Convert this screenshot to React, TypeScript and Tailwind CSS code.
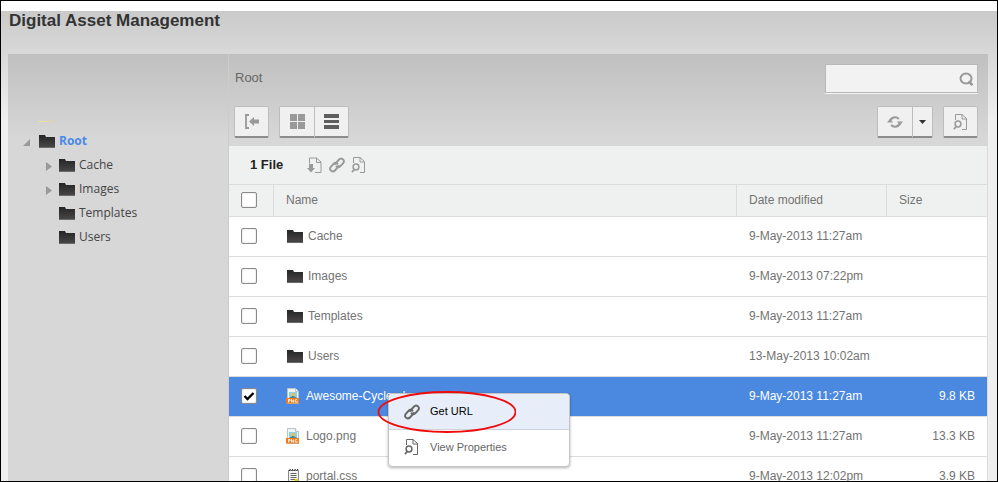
import { useState } from 'react';

type Kind = 'folder' | 'png' | 'css';

interface Entry {
  name: string;
  kind: Kind;
  modified: string;
  size?: string;
}

const entries: Entry[] = [
  { name: 'Cache', kind: 'folder', modified: '9-May-2013 11:27am' },
  { name: 'Images', kind: 'folder', modified: '9-May-2013 07:22pm' },
  { name: 'Templates', kind: 'folder', modified: '9-May-2013 11:27am' },
  { name: 'Users', kind: 'folder', modified: '13-May-2013 10:02am' },
  { name: 'Awesome-Cycles-Logo.png', kind: 'png', modified: '9-May-2013 11:27am', size: '9.8 KB' },
  { name: 'Logo.png', kind: 'png', modified: '9-May-2013 11:27am', size: '13.3 KB' },
  { name: 'portal.css', kind: 'css', modified: '9-May-2013 12:02pm', size: '3.9 KB' },
];

const tree = [
  { name: 'Cache', expandable: true },
  { name: 'Images', expandable: true },
  { name: 'Templates', expandable: false },
  { name: 'Users', expandable: false },
];

function FolderIcon() {
  return (
    <svg width="16" height="13" viewBox="0 0 16 13" className="shrink-0" aria-hidden="true">
      <defs>
        <linearGradient id="folderFill" x1="0" y1="0" x2="0" y2="1">
          <stop offset="0" stopColor="#262626" />
          <stop offset="1" stopColor="#4a4747" />
        </linearGradient>
      </defs>
      <path d="M0 0h6l1 2h9v11H0z" fill="url(#folderFill)" />
      <path d="M0 12.5h16" stroke="#777" strokeOpacity=".7" />
    </svg>
  );
}

function PngIcon() {
  return (
    <svg width="16" height="16" viewBox="0 0 16 16" className="shrink-0" aria-hidden="true">
      <path d="M1.500 .5h8l3 3v12h-11z" fill="#eef3f5" stroke="#b9c2c6" />
      <path d="M9.500 .5v3h3" fill="#fff" stroke="#b9c2c6" />
      <path d="M3 4h8v6H3z" fill="#8fd0ee" />
      <path d="M3 10l4-2.500 4 2.500z" fill="#4f8296" />
      <circle cx="7" cy="6.500" r="1.800" fill="#e9c63a" />
      <path d="M0 10h13v5.500H0z" fill="#ee7a1a" />
      <path d="M2.500 14.500v-3H4v1.500H2.500M5.500 14.500v-3l2 3v-3M11.300 11.700H9.300v2.500h2v-1.200" fill="none" stroke="#fff" strokeWidth=".8" />
    </svg>
  );
}

function CssIcon() {
  return (
    <svg width="16" height="16" viewBox="0 0 16 16" className="shrink-0" aria-hidden="true">
      <path d="M2.500 2.500h10v12h-10z" fill="#f4f4f4" stroke="#888" />
      <path d="M3 3l1.500-2M5.500 3l1.500-2M8 3l1.500-2M10.500 3l1.500-2" stroke="#222" />
      <path d="M4.500 5.500h6M4.500 7.500h6M4.500 9.500h6M4.500 11.500h5" stroke="#666" />
      <circle cx="10.500" cy="12.500" r="2" fill="#e8cf2c" />
    </svg>
  );
}

function LinkIcon() {
  return (
    <svg width="16" height="16" viewBox="0 0 16 16" fill="none" stroke="currentColor" strokeWidth="2" strokeLinecap="round" aria-hidden="true">
      <path d="M6.200 7l3.700-4.300c1.100-1.200 2.700-1.400 3.900-.5 1.400 1.100 1.500 2.700.4 3.900l-2.700 3c-1.100 1.200-2.700 1.200-3.900.300" />
      <path d="M9.800 9l-3.700 4.300c-1.100 1.200-2.700 1.400-3.900.5-1.400-1.100-1.500-2.700-.4-3.900l2.700-3c1.100-1.200 2.700-1.200 3.900-.300" />
    </svg>
  );
}

function DownloadIcon() {
  return (
    <svg width="16" height="16" viewBox="0 0 16 16" fill="none" stroke="currentColor" aria-hidden="true">
      <path d="M2.500 6.500V1h7l4.500 4v10.500H8" />
      <path d="M9.500 1v4.500H14" />
      <path d="M2 7h4v4h2l-4 4.500L0 11h2z" fill="currentColor" stroke="none" />
    </svg>
  );
}

function PropertiesIcon() {
  return (
    <svg width="16" height="16" viewBox="0 0 16 16" fill="none" stroke="currentColor" aria-hidden="true">
      <path d="M2.500 6V.5h6.500l4.500 4v11H9" />
      <path d="M9 .5v4.500h4.500" />
      <circle cx="5" cy="10" r="2.900" strokeWidth="1.500" />
      <path d="M3.300 12.300L1 15.200" strokeWidth="1.800" />
    </svg>
  );
}

function RefreshIcon() {
  return (
    <svg width="16" height="14" viewBox="0 0 16 14" fill="none" stroke="currentColor" strokeWidth="2" aria-hidden="true">
      <path d="M3 6.500a5 4.800 0 0 1 8.800-2.500" />
      <path d="M13 7.500a5 4.800 0 0 1-8.800 2.500" />
      <path d="M0 7.500h6L3 3.800z" fill="currentColor" stroke="none" />
      <path d="M10 6.500h6L13 10.200z" fill="currentColor" stroke="none" />
    </svg>
  );
}

function Checkbox({ label, checked = false }: { label: string; checked?: boolean }) {
  const [on, setOn] = useState(checked);
  return (
    <label className="grid size-4 place-items-center">
      <input
        type="checkbox"
        aria-label={label}
        checked={on}
        onChange={() => setOn(!on)}
        className="peer col-start-1 row-start-1 size-4 appearance-none rounded-xs border border-[#8a8a8a] bg-white shadow-[inset_0_0_2px_#ccc]"
      />
      <svg viewBox="0 0 12 12" className="pointer-events-none invisible col-start-1 row-start-1 size-3 peer-checked:visible" aria-hidden="true">
        <path d="M1.500 6l3 3L10.500 3" fill="none" stroke="#000" strokeWidth="2.400" />
      </svg>
    </label>
  );
}

const toolButton =
  'flex h-8 items-center justify-center border border-[#bdbdbd] border-b-2 border-b-[#8c8c8c] bg-[#f0f0f0] text-[#999]';

function ContextMenu() {
  return (
    <div className="absolute top-4 left-[114px] z-10">
      <div role="menu" className="w-[182px] overflow-hidden rounded-sm border border-[#c4c4c4] bg-white text-[11px] shadow-[0_1px_3px_rgba(0,0,0,0.3)]">
        <button role="menuitem" className="flex h-9 w-full items-center gap-2.5 border-b border-[#ccd3dc] bg-[#e7eefa] pl-[15px] text-black">
          <span className="text-[#666]"><LinkIcon /></span>
          Get URL
        </button>
        <button role="menuitem" className="flex h-9 w-full items-center gap-2.5 pb-0.5 pl-[15px] text-[#666]">
          <PropertiesIcon />
          View Properties
        </button>
      </div>
      <svg width="140" height="44" viewBox="0 0 140 44" className="pointer-events-none absolute -top-1 -left-3" aria-hidden="true">
        <ellipse cx="71" cy="23" rx="68.500" ry="20" fill="none" stroke="#f00b0b" strokeWidth="1.800" />
      </svg>
    </div>
  );
}

function FileTable() {
  return (
    <table className="w-full table-fixed border-separate border-spacing-0 text-xs text-[#737373]">
      <colgroup>
        <col className="w-[45px]" />
        <col />
        <col className="w-[150px]" />
        <col className="w-[100px]" />
      </colgroup>
      <thead className="bg-[#eff1f1]">
        <tr className="h-8 text-left">
          <th className="border-r border-b border-[#dcdcdc] pb-0.5 pl-3"><Checkbox label="Select all" /></th>
          <th className="border-r border-b border-[#dcdcdc] pb-0.5 pl-3 font-normal">Name</th>
          <th className="border-r border-b border-[#dcdcdc] pb-0.5 pl-3 font-normal">Date modified</th>
          <th className="border-b border-[#dcdcdc] pb-0.5 pl-3 font-normal">Size</th>
        </tr>
      </thead>
      <tbody>
        {entries.map((entry, i) => {
          const selected = i === 4;
          return (
            <tr key={entry.name} className={selected ? 'h-10 bg-[#4b89e1] text-white' : 'h-10 bg-white'}>
              <td className="border-b border-[#dcdcdc] pb-0.5 pl-3">
                <Checkbox label={`Select ${entry.name}`} checked={selected} />
              </td>
              <td className="relative border-b border-[#dcdcdc] pb-0.5 pl-3">
                <div className={entry.kind === 'folder' ? 'flex items-center gap-[5px] pl-px' : 'flex items-center gap-1'}>
                  {entry.kind === 'folder' && <span className="pt-0.5"><FolderIcon /></span>}
                  {entry.kind === 'png' && <PngIcon />}
                  {entry.kind === 'css' && <CssIcon />}
                  {entry.name}
                </div>
                {selected && <ContextMenu />}
              </td>
              <td className="border-b border-[#dcdcdc] pb-0.5 pl-3">{entry.modified}</td>
              <td className="border-b border-[#dcdcdc] pr-3 pb-0.5 text-right">{entry.size}</td>
            </tr>
          );
        })}
      </tbody>
    </table>
  );
}

function Sidebar() {
  return (
    <nav aria-label="Folders" className="w-[221px] shrink-0 border-r border-[#cccccc] pt-[67px] font-['Open_Sans','Noto_Sans',sans-serif] text-xs text-[#444]">
      <div className="mb-[7px] ml-[31px] h-px w-4 bg-linear-to-r from-[#f5e68a] to-[#d8d2b0]" />
      <div className="flex h-6 items-center pl-[15px]">
        <svg width="7" height="7" viewBox="0 0 7 7" className="mt-0.5 mr-[9px]" aria-hidden="true">
          <path d="M7 0v7H0z" fill="#999" />
        </svg>
        <FolderIcon />
        <a href="#root" className="ml-1 font-bold text-[#4b89e8]">Root</a>
      </div>
      <ul>
        {tree.map((node) => (
          <li key={node.name} className="flex h-6 items-center pl-[38px]">
            <svg width="6" height="9" viewBox="0 0 6 9" className="mt-0.5 mr-[7px]" aria-hidden="true">
              {node.expandable && <path d="M0 0l6 4.500L0 9z" fill="#999" />}
            </svg>
            <FolderIcon />
            <a href={`#${node.name}`} className="ml-1">{node.name}</a>
          </li>
        ))}
      </ul>
    </nav>
  );
}

export default function App() {
  return (
    <div className="flex h-screen flex-col overflow-hidden border border-black bg-white pt-2.5 font-['Liberation_Sans',Arial,sans-serif]">
      <div className="flex min-h-0 flex-1 flex-col bg-[#efefef] bg-[linear-gradient(#cacaca,#efefef_110px)] pr-[9px] pl-[7px]">
        <h1 className="h-[43px] shrink-0 pl-px text-[17px] leading-[19px] font-bold text-[#333]">Digital Asset Management</h1>
        <div className="flex min-h-0 flex-1 overflow-hidden bg-[#d7d7d7] bg-[linear-gradient(#c0c0c0,#d7d7d7_85px)]">
          <Sidebar />
          <main className="min-w-0 flex-1">
            <header className="flex h-[92px] flex-col justify-between pt-2.5 pr-2.5 pb-2 pl-[5px]">
              <div className="flex justify-between">
                <h2 className="pt-1 pl-px text-[13px] leading-5 text-[#666]">Root</h2>
                <div className="flex h-[29px] w-[153px] items-center border border-[#b8b8b8] bg-[#f2f2f2] pr-1 shadow-[0_1px_0_#f4f4f4]">
                  <input type="search" aria-label="Search" className="h-full min-w-0 flex-1 bg-transparent px-2 text-xs outline-none" />
                  <svg width="14" height="14" viewBox="0 0 14 14" fill="none" stroke="#999" strokeWidth="2" aria-hidden="true">
                    <ellipse cx="7" cy="6.500" rx="5.500" ry="5" />
                    <path d="M9.500 9.500l4 3.500" strokeWidth="2.600" />
                  </svg>
                </div>
              </div>
              <div className="flex">
                <button aria-label="Collapse panel" className={`${toolButton} w-[35px] rounded-xs`}>
                  <svg width="14" height="15" viewBox="0 0 14 15" aria-hidden="true">
                    <path d="M4 1H1v13h3" fill="none" stroke="#999" strokeWidth="1.800" />
                    <path d="M4 7.500l5-4.500v2.500h5v4H9V12z" fill="#999" />
                  </svg>
                </button>
                <button aria-label="Grid view" className={`${toolButton} ml-2.5 w-9 rounded-l-xs`}>
                  <svg width="15" height="15" viewBox="0 0 15 15" fill="#999" aria-hidden="true">
                    <path d="M0 0h7v7H0zM8 0h7v7H8zM0 8h7v7H0zM8 8h7v7H8z" />
                  </svg>
                </button>
                <button aria-label="List view" className={`${toolButton} w-[34px] rounded-r-xs border-l-0`}>
                  <svg width="15" height="15" viewBox="0 0 15 15" fill="#5e5e5e" aria-hidden="true">
                    <path d="M0 0h15v4H0zM0 6h15v3H0zM0 11h15v4H0z" />
                  </svg>
                </button>
                <button aria-label="Refresh" className={`${toolButton} ml-auto w-9 rounded-l-xs`}>
                  <RefreshIcon />
                </button>
                <button aria-label="Refresh options" className={`${toolButton} w-5 rounded-r-xs border-l-0`}>
                  <svg width="7" height="4" viewBox="0 0 7 4" aria-hidden="true"><path d="M0 0h7L3.500 4z" fill="#333" /></svg>
                </button>
                <button aria-label="Properties" className={`${toolButton} ml-2.5 w-[35px] rounded-xs`}>
                  <PropertiesIcon />
                </button>
              </div>
            </header>
            <section className="border-r border-[#dcdcdc] bg-white">
              <div className="flex h-[39px] items-center border-b border-[#dcdcdc] bg-[#eff1f1] pl-[21px] text-[#999]">
                <p className="mr-6 text-[13px] font-bold text-[#222]">1 File</p>
                <div className="flex gap-1.5">
                  <button aria-label="Download"><DownloadIcon /></button>
                  <button aria-label="Get URL"><LinkIcon /></button>
                  <button aria-label="View properties"><PropertiesIcon /></button>
                </div>
              </div>
              <FileTable />
            </section>
          </main>
        </div>
      </div>
    </div>
  );
}
